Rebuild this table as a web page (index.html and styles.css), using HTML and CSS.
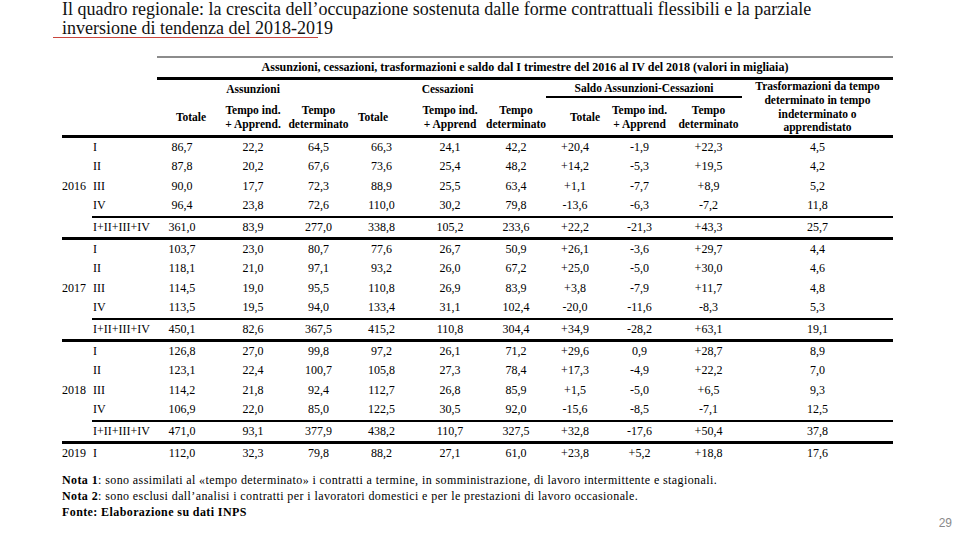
FILE: index.html
```html
<!DOCTYPE html>
<html lang="it">
<head>
<meta charset="utf-8">
<title>Il quadro regionale</title>
<link rel="stylesheet" href="styles.css">
</head>
<body>
<div class="slide">
  <h1 class="title">Il quadro regionale: la crescita dell’occupazione sostenuta dalle forme contrattuali flessibili e la parziale<br>inversione di tendenza del 2018-2019</h1>

  <table class="data">
    <colgroup>
      <col class="c-year"><col class="c-q">
      <col class="c-tot1"><col class="c-t1"><col class="c-d1">
      <col class="c-tot2"><col class="c-t2"><col class="c-d2">
      <col class="c-tot3"><col class="c-t3"><col class="c-d3">
      <col class="c-tr">
    </colgroup>
    <thead>
      <tr class="cap-row">
        <th colspan="2" class="blank"></th>
        <th colspan="10" class="caption">Assunzioni, cessazioni, trasformazioni e saldo dal I trimestre del 2016 al IV del 2018 (valori in migliaia)</th>
      </tr>
      <tr class="grp-row">
        <th colspan="2" class="blank"></th>
        <th colspan="3">Assunzioni</th>
        <th colspan="3">Cessazioni</th>
        <th colspan="3" class="saldo">Saldo Assunzioni-Cessazioni</th>
        <th rowspan="2" class="trasf">Trasformazioni da tempo<br>determinato in tempo<br>indeterminato o<br>apprendistato</th>
      </tr>
      <tr class="sub-row">
        <th colspan="2" class="blank"></th>
        <th class="h-tot1">Totale</th>
        <th>Tempo ind.<br>+ Apprend.</th>
        <th>Tempo<br>determinato</th>
        <th class="h-tot2">Totale</th>
        <th>Tempo ind.<br>+ Apprend</th>
        <th>Tempo<br>determinato</th>
        <th class="h-tot3">Totale</th>
        <th>Tempo ind.<br>+ Apprend</th>
        <th>Tempo<br>determinato</th>
      </tr>
    </thead>
    <tbody>
      <tr><td class="y"></td><td class="q">I</td><td class="tot1">86,7</td><td>22,2</td><td>64,5</td><td>66,3</td><td>24,1</td><td>42,2</td><td>+20,4</td><td>-1,9</td><td>+22,3</td><td>4,5</td></tr>
      <tr><td class="y"></td><td class="q">II</td><td class="tot1">87,8</td><td>20,2</td><td>67,6</td><td>73,6</td><td>25,4</td><td>48,2</td><td>+14,2</td><td>-5,3</td><td>+19,5</td><td>4,2</td></tr>
      <tr><td class="y">2016</td><td class="q">III</td><td class="tot1">90,0</td><td>17,7</td><td>72,3</td><td>88,9</td><td>25,5</td><td>63,4</td><td>+1,1</td><td>-7,7</td><td>+8,9</td><td>5,2</td></tr>
      <tr class="before-sum"><td class="y"></td><td class="q">IV</td><td class="tot1">96,4</td><td>23,8</td><td>72,6</td><td>110,0</td><td>30,2</td><td>79,8</td><td>-13,6</td><td>-6,3</td><td>-7,2</td><td>11,8</td></tr>
      <tr class="sum"><td class="y"></td><td class="q">I+II+III+IV</td><td class="tot1">361,0</td><td>83,9</td><td>277,0</td><td>338,8</td><td>105,2</td><td>233,6</td><td>+22,2</td><td>-21,3</td><td>+43,3</td><td>25,7</td></tr>

      <tr><td class="y"></td><td class="q">I</td><td class="tot1">103,7</td><td>23,0</td><td>80,7</td><td>77,6</td><td>26,7</td><td>50,9</td><td>+26,1</td><td>-3,6</td><td>+29,7</td><td>4,4</td></tr>
      <tr><td class="y"></td><td class="q">II</td><td class="tot1">118,1</td><td>21,0</td><td>97,1</td><td>93,2</td><td>26,0</td><td>67,2</td><td>+25,0</td><td>-5,0</td><td>+30,0</td><td>4,6</td></tr>
      <tr><td class="y">2017</td><td class="q">III</td><td class="tot1">114,5</td><td>19,0</td><td>95,5</td><td>110,8</td><td>26,9</td><td>83,9</td><td>+3,8</td><td>-7,9</td><td>+11,7</td><td>4,8</td></tr>
      <tr class="before-sum"><td class="y"></td><td class="q">IV</td><td class="tot1">113,5</td><td>19,5</td><td>94,0</td><td>133,4</td><td>31,1</td><td>102,4</td><td>-20,0</td><td>-11,6</td><td>-8,3</td><td>5,3</td></tr>
      <tr class="sum"><td class="y"></td><td class="q">I+II+III+IV</td><td class="tot1">450,1</td><td>82,6</td><td>367,5</td><td>415,2</td><td>110,8</td><td>304,4</td><td>+34,9</td><td>-28,2</td><td>+63,1</td><td>19,1</td></tr>

      <tr><td class="y"></td><td class="q">I</td><td class="tot1">126,8</td><td>27,0</td><td>99,8</td><td>97,2</td><td>26,1</td><td>71,2</td><td>+29,6</td><td>0,9</td><td>+28,7</td><td>8,9</td></tr>
      <tr><td class="y"></td><td class="q">II</td><td class="tot1">123,1</td><td>22,4</td><td>100,7</td><td>105,8</td><td>27,3</td><td>78,4</td><td>+17,3</td><td>-4,9</td><td>+22,2</td><td>7,0</td></tr>
      <tr><td class="y">2018</td><td class="q">III</td><td class="tot1">114,2</td><td>21,8</td><td>92,4</td><td>112,7</td><td>26,8</td><td>85,9</td><td>+1,5</td><td>-5,0</td><td>+6,5</td><td>9,3</td></tr>
      <tr class="before-sum"><td class="y"></td><td class="q">IV</td><td class="tot1">106,9</td><td>22,0</td><td>85,0</td><td>122,5</td><td>30,5</td><td>92,0</td><td>-15,6</td><td>-8,5</td><td>-7,1</td><td>12,5</td></tr>
      <tr class="sum"><td class="y"></td><td class="q">I+II+III+IV</td><td class="tot1">471,0</td><td>93,1</td><td>377,9</td><td>438,2</td><td>110,7</td><td>327,5</td><td>+32,8</td><td>-17,6</td><td>+50,4</td><td>37,8</td></tr>

      <tr><td class="y">2019</td><td class="q">I</td><td class="tot1">112,0</td><td>32,3</td><td>79,8</td><td>88,2</td><td>27,1</td><td>61,0</td><td>+23,8</td><td>+5,2</td><td>+18,8</td><td>17,6</td></tr>
    </tbody>
  </table>

  <div class="foot">
    <div class="notes">
      <p><b>Nota 1</b>: sono assimilati al «tempo determinato» i contratti a termine, in somministrazione, di lavoro intermittente e stagionali.</p>
      <p><b>Nota 2</b>: sono esclusi dall’analisi i contratti per i lavoratori domestici e per le prestazioni di lavoro occasionale.</p>
      <p><b>Fonte: Elaborazione su dati INPS</b></p>
    </div>
    <div class="page-num">29</div>
  </div>
</div>
</body>
</html>
```

FILE: styles.css
```css
html, body {
  margin: 0;
  padding: 0;
  background: #ffffff;
}

.slide {
  width: 960px;
  height: 540px;
  overflow: hidden;
  display: flex;
  flex-direction: column;
  font-family: "Liberation Serif", "Times New Roman", serif;
  color: #000;
}

.title {
  position: relative;
  margin: 0;
  padding: 0 0 0 62px;
  font-size: 18px;
  line-height: 19px;
  font-weight: normal;
  color: #111;
}

.title::after {
  content: "";
  position: absolute;
  left: 53px;
  top: 37px;
  width: 265px;
  height: 1px;
  background: #c9463d;
}

/* table */
.data {
  margin: 18px 0 0 62px;
  width: 831px;
  table-layout: fixed;
  border-collapse: separate;
  border-spacing: 0;
  font-family: "Liberation Serif", "Times New Roman", serif;
  font-size: 12px;
}

.c-year { width: 30px; }
.c-q { width: 65px; }
.c-tot1 { width: 61px; }
.c-t1 { width: 70px; }
.c-d1 { width: 61px; }
.c-tot2 { width: 65px; }
.c-t2 { width: 72px; }
.c-d2 { width: 60px; }
.c-tot3 { width: 58px; }
.c-t3 { width: 71px; }
.c-d3 { width: 67px; }
.c-tr { width: 151px; }

.data th {
  padding: 0;
  font-weight: bold;
  font-size: 11.5px;
  text-align: center;
  vertical-align: middle;
  white-space: nowrap;
}

.cap-row .caption {
  height: 19px;
  border-top: 2px solid #8c8c8c;
  border-bottom: 3px solid #000;
  line-height: 19px;
  font-size: 12px;
}

.grp-row th {
  height: 16px;
  line-height: 16px;
}

.grp-row .saldo {
  border-bottom: 2px solid #000;
}

.grp-row .trasf {
  line-height: 13.75px;
  border-bottom: 3px solid #000;
}

.sub-row th {
  height: 37px;
  line-height: 14px;
  border-bottom: 3px solid #000;
}

.sub-row .h-tot1 { padding-left: 7px; }
.sub-row .h-tot2 { padding-right: 17px; }
.sub-row .h-tot3 { padding-left: 20px; }

.data td {
  padding: 0;
  line-height: 19.4px;
  text-align: center;
  white-space: nowrap;
}

.data td.y {
  text-align: left;
}

.data td.q {
  text-align: left;
  padding-left: 1px;
}

.data td.tot1 {
  padding-right: 11px;
}

.before-sum td:not(.y) {
  border-bottom: 2px solid #000;
}

.sum td {
  border-bottom: 3px solid #000;
}

/* footer */
.foot {
  display: flex;
  justify-content: space-between;
  align-items: flex-end;
  margin-top: 8px;
}

.notes {
  padding-left: 62px;
  font-size: 12px;
  line-height: 16px;
  letter-spacing: 0.4px;
}

.notes p {
  margin: 0;
}

.page-num {
  padding-right: 8px;
  margin-bottom: -10px;
  font-family: "Liberation Sans", Arial, sans-serif;
  font-size: 12px;
  color: #8a8a8a;
}
```
